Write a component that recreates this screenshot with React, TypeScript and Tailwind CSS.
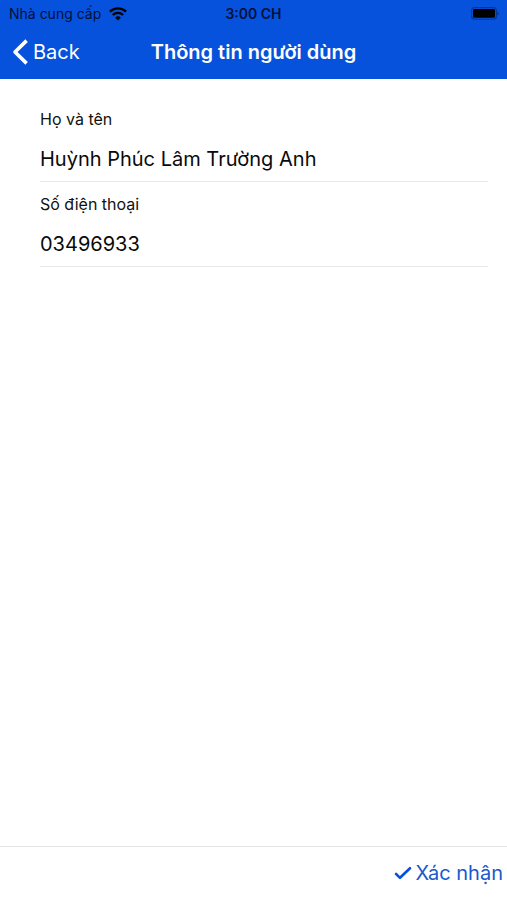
import { useState } from "react";

function WifiIcon() {
  return (
    <svg width="18" height="14" viewBox="0 0 18 14" fill="none" stroke="currentColor" strokeWidth="2.4" aria-hidden="true">
      <path d="M0.9 4.7a11.6 11.6 0 0 1 16.2 0" />
      <path d="M3.8 8a7.4 7.4 0 0 1 10.4 0" />
      <path d="M9 13.6l-2.8-2.9a4 4 0 0 1 5.6 0z" fill="currentColor" stroke="none" />
    </svg>
  );
}

function BatteryIcon() {
  return (
    <svg width="28" height="13" viewBox="0 0 28 13" aria-hidden="true">
      <rect x="0.6" y="0.6" width="24.8" height="11.6" rx="3" fill="none" stroke="#000" strokeOpacity="0.35" strokeWidth="1.1" />
      <rect x="2" y="2" width="22" height="8.8" rx="1.4" fill="#000" />
      <path d="M26.4 4.5c1.6.6 1.6 3.4 0 4z" fill="#000" fillOpacity="0.4" />
    </svg>
  );
}

type FieldProps = {
  id: string;
  label: string;
  type: string;
  value: string;
  onChange: (value: string) => void;
};

function Field({ id, label, type, value, onChange }: FieldProps) {
  return (
    <div className="flex flex-col border-b border-[#e8e8e8] pt-3">
      <label htmlFor={id} className="text-base leading-5 text-[#111111]">
        {label}
      </label>
      <input
        id={id}
        type={type}
        value={value}
        onChange={(e) => onChange(e.target.value)}
        className="mt-2 h-11 w-full bg-transparent text-xl text-[#0a0a0a] outline-none"
      />
    </div>
  );
}

export default function App() {
  const [name, setName] = useState("Huỳnh Phúc Lâm Trường Anh");
  const [phone, setPhone] = useState("03496933");

  return (
    <div className="flex min-h-screen flex-col bg-white font-['Inter','Liberation_Sans',sans-serif]">
      <header className="bg-[#0652dd]">
        <div className="grid h-7 grid-cols-[1fr_auto_1fr] items-center px-2 pb-px text-sm text-[#00103a]">
          <div className="flex items-center gap-2">
            <span className="pl-px">Nhà cung cấp</span>
            <span className="text-black">
              <WifiIcon />
            </span>
          </div>
          <time className="font-semibold">3:00 CH</time>
          <div className="flex justify-end">
            <BatteryIcon />
          </div>
        </div>
        <div className="grid h-[51px] grid-cols-[1fr_auto_1fr] items-center px-3 pb-1 text-white">
          <button type="button" className="flex items-center gap-1 justify-self-start text-xl">
            <svg width="17" height="26" viewBox="0 0 17 26" fill="none" stroke="currentColor" strokeWidth="3.6" strokeLinejoin="round" aria-hidden="true">
              <path d="M14.6 1.6L3 13l11.6 11.4" />
            </svg>
            Back
          </button>
          <h1 className="text-xl font-semibold">Thông tin người dùng</h1>
        </div>
      </header>

      <main className="flex grow flex-col pt-[18px] pr-[19px] pl-10">
        <Field id="name" label="Họ và tên" type="text" value={name} onChange={setName} />
        <Field id="phone" label="Số điện thoại" type="tel" value={phone} onChange={setPhone} />
      </main>

      <footer className="flex h-[54px] items-center justify-end border-t border-[#e4e4e4] pr-1 pb-0.5">
        <button type="button" className="flex items-center gap-1 text-xl text-[#1a58cc]">
          <svg width="18" height="14" viewBox="0 0 18 14" fill="none" stroke="#0652dd" strokeWidth="2.6" strokeLinecap="round" strokeLinejoin="round" aria-hidden="true">
            <path d="M2 7.8l4 4L16 2.2" />
          </svg>
          Xác nhận
        </button>
      </footer>
    </div>
  );
}
